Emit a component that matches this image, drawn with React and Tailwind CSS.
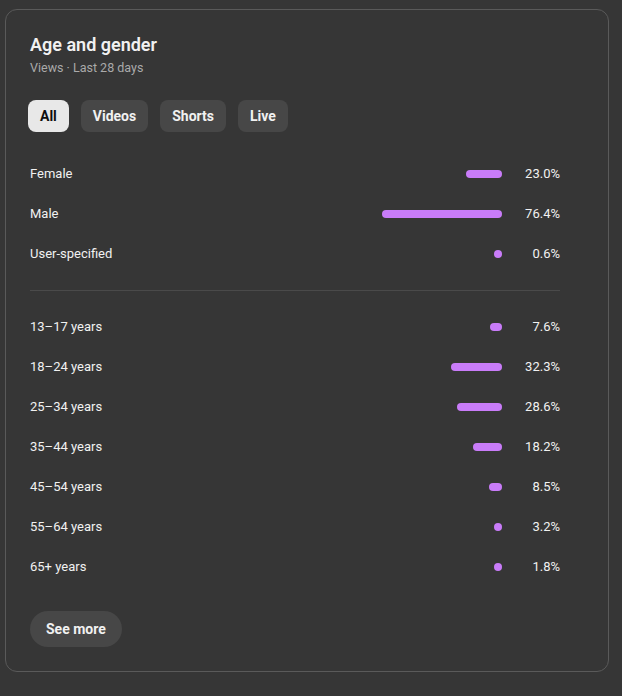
import React from "react";

const gender = [
  ["Female", 23.0],
  ["Male", 76.4],
  ["User-specified", 0.6],
];
const ages = [
  ["13–17 years", 7.6],
  ["18–24 years", 32.3],
  ["25–34 years", 28.6],
  ["35–44 years", 18.2],
  ["45–54 years", 8.5],
  ["55–64 years", 3.2],
  ["65+ years", 1.8],
];

function Row({ label, value }) {
  const w = Math.max(8, Math.round((value / 100) * 157));
  return (
    <div className="flex h-[40px] items-center">
      <div className="flex-1 text-[13px] font-normal text-[#f1f1f1]">{label}</div>
      <div className="flex w-[157px] justify-end">
        <div className="h-[8px] rounded-full bg-[#c97cf9]" style={{ width: w }} />
      </div>
      <div className="w-[58px] text-right text-[13px] font-normal text-[#f1f1f1]">
        {value.toFixed(1)}%
      </div>
    </div>
  );
}

export default function App() {
  return (
    <div
      className="min-h-[696px] bg-[#363636] pl-[5px] pt-[9px]"
      style={{ fontFamily: "Roboto, 'Noto Sans', sans-serif" }}
    >
      <div className="w-[604px] rounded-[12px] border border-[#5a5a5a] bg-[#363636] px-6 pb-6 pt-[22px]">
        <div className="text-[18px] font-semibold leading-[26px] text-[#f1f1f1]">Age and gender</div>
        <div className="mt-[1px] text-[12.5px] leading-[18px] text-[#aaaaaa]">Views · Last 28 days</div>
        <div className="ml-[-2px] mt-[23px] flex gap-3">
          <button className="h-8 rounded-lg bg-[#e8e8e8] px-3 text-[14px] font-bold text-[#0f0f0f]">All</button>
          <button className="h-8 rounded-lg bg-[#474747] px-3 text-[14px] font-bold text-[#f1f1f1]">Videos</button>
          <button className="h-8 rounded-lg bg-[#474747] px-3 text-[14px] font-bold text-[#f1f1f1]">Shorts</button>
          <button className="h-8 rounded-lg bg-[#474747] px-3 text-[14px] font-bold text-[#f1f1f1]">Live</button>
        </div>
        <div className="mt-[22px] w-[530px]">
          {gender.map(([l, v]) => (
            <Row key={l} label={l} value={v} />
          ))}
          <div className="mb-4 mt-[16px] h-px bg-[#4a4a4a]" />
          {ages.map(([l, v]) => (
            <Row key={l} label={l} value={v} />
          ))}
        </div>
        <button className="mt-[24px] h-9 rounded-full bg-[#474747] px-4 text-[14px] font-bold text-[#f1f1f1]">
          See more
        </button>
      </div>
    </div>
  );
}
